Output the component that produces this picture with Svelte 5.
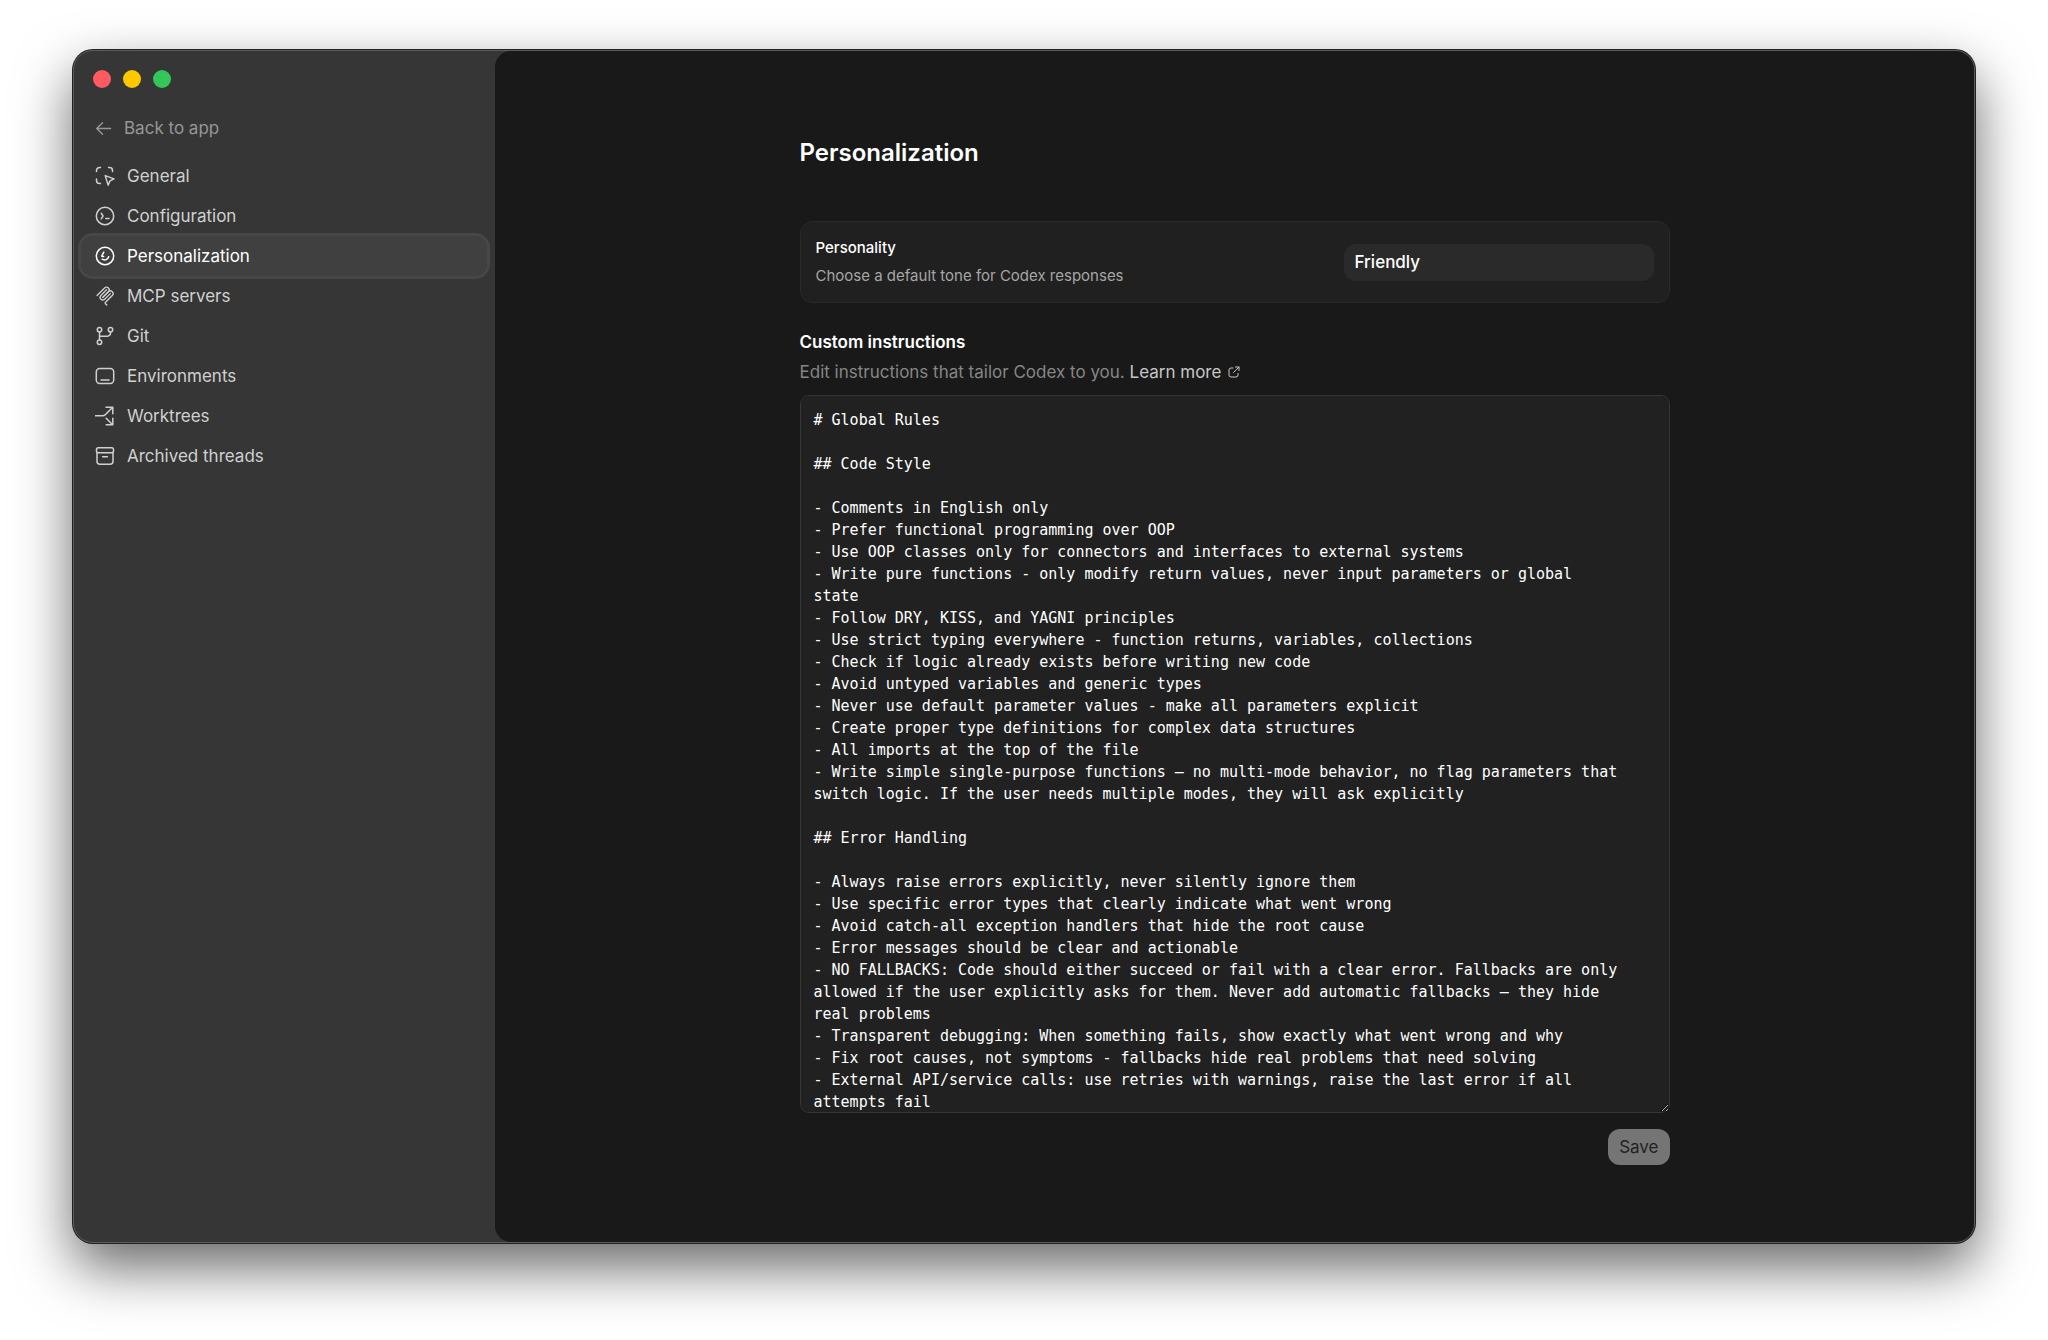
<script lang="ts">
	type NavItem = { id: string; label: string };

	const navItems: NavItem[] = [
		{ id: 'general', label: 'General' },
		{ id: 'configuration', label: 'Configuration' },
		{ id: 'personalization', label: 'Personalization' },
		{ id: 'mcp', label: 'MCP servers' },
		{ id: 'git', label: 'Git' },
		{ id: 'environments', label: 'Environments' },
		{ id: 'worktrees', label: 'Worktrees' },
		{ id: 'archived', label: 'Archived threads' }
	];

	let active = $state('personalization');
	let personality = $state('friendly');

	const savedInstructions = `# Global Rules

## Code Style

- Comments in English only
- Prefer functional programming over OOP
- Use OOP classes only for connectors and interfaces to external systems
- Write pure functions - only modify return values, never input parameters or global state
- Follow DRY, KISS, and YAGNI principles
- Use strict typing everywhere - function returns, variables, collections
- Check if logic already exists before writing new code
- Avoid untyped variables and generic types
- Never use default parameter values - make all parameters explicit
- Create proper type definitions for complex data structures
- All imports at the top of the file
- Write simple single-purpose functions — no multi-mode behavior, no flag parameters that switch logic. If the user needs multiple modes, they will ask explicitly

## Error Handling

- Always raise errors explicitly, never silently ignore them
- Use specific error types that clearly indicate what went wrong
- Avoid catch-all exception handlers that hide the root cause
- Error messages should be clear and actionable
- NO FALLBACKS: Code should either succeed or fail with a clear error. Fallbacks are only allowed if the user explicitly asks for them. Never add automatic fallbacks — they hide real problems
- Transparent debugging: When something fails, show exactly what went wrong and why
- Fix root causes, not symptoms - fallbacks hide real problems that need solving
- External API/service calls: use retries with warnings, raise the last error if all attempts fail
`;

	let instructions = $state(savedInstructions);
	let dirty = $derived(instructions !== savedInstructions);
</script>

<div class="desktop">
	<div class="window">
		<aside class="sidebar">
			<div class="lights">
				<button class="light red" aria-label="Close"></button>
				<button class="light yellow" aria-label="Minimize"></button>
				<button class="light green" aria-label="Zoom"></button>
			</div>

			<button class="back">
				<svg viewBox="0 0 18 18"><path d="M16.5 9H2M8 2.8 1.8 9 8 15.2" /></svg>
				Back to app
			</button>

			<nav>
				{#each navItems as item (item.id)}
					<button
						class="nav-item"
						class:active={active === item.id}
						onclick={() => (active = item.id)}
					>
						<svg viewBox="0 0 20 20">
							{#if item.id === 'general'}
								<path
									d="M1.500 5.500V4.500a3 3 0 0 1 3-3h1M13.500 1.500h1a3 3 0 0 1 3 3v1M1.500 13v1.500a3 3 0 0 0 3 3h1M10.200 9.600l8.800 3.300-4 2-1.900 4.200z"
								/>
							{:else if item.id === 'configuration'}
								<circle cx="10" cy="10" r="8.700" />
								<path d="M6.300 7.200 8 10l-1.700 2.800M10.800 12.600h3.200" />
							{:else if item.id === 'personalization'}
								<circle cx="10" cy="10" r="8.700" />
								<path d="M8.800 6.200C7.800 7.800 7 9 6.800 10.200l1.800.4M7.300 13.200c2.600 1.600 5.400.3 6.400-2.400" />
							{:else if item.id === 'mcp'}
								<g transform="scale(0.112)" stroke-width="12">
									<path d="M18 84.850 85.880 16.970c9.370-9.370 24.570-9.370 33.940 0s9.370 24.570 0 33.940L68.560 102.180" />
									<path
										d="M69.270 101.470 119.820 50.910c9.370-9.370 24.570-9.370 33.940 0l.35.35c9.370 9.370 9.370 24.570 0 33.940L92.720 146.600c-3.120 3.120-3.120 8.190 0 11.310l12.610 12.610"
									/>
									<path d="M102.850 33.940 52.650 84.150c-9.370 9.370-9.370 24.570 0 33.940s24.570 9.370 33.940 0l50.200-50.200" />
								</g>
							{:else if item.id === 'git'}
								<circle cx="4.500" cy="3.800" r="2.200" />
								<circle cx="15.500" cy="3.800" r="2.200" />
								<circle cx="4.500" cy="16.200" r="2.200" />
								<path d="M4.500 6v8M15.500 6v1.200a3 3 0 0 1-3 3h-8" />
							{:else if item.id === 'environments'}
								<rect x="1.300" y="2.600" width="17.400" height="14.800" rx="3.400" />
								<path d="M6 13.900h8" />
							{:else if item.id === 'worktrees'}
								<path
									d="M0 9.800h7.500c1.500 0 2.200-.5 3-1.300l6.700-6.700M11 1.300h6.800v6.500M11.200 12.200l6 6M11.200 18.700h6.600v-6.500"
								/>
							{:else}
								<path d="M2 6.800v8.400a3 3 0 0 0 3 3h10a3 3 0 0 0 3-3V6.800M7.600 10.800h4.800" />
								<rect x="1.500" y="1.800" width="17" height="5" rx="1.800" />
							{/if}
						</svg>
						{item.label}
					</button>
				{/each}
			</nav>
		</aside>

		<main>
			<div class="content">
				<h1>Personalization</h1>

				<section class="card">
					<div class="card-text">
						<label for="personality">Personality</label>
						<p>Choose a default tone for Codex responses</p>
					</div>
					<select id="personality" bind:value={personality}>
						<option value="friendly">Friendly</option>
						<option value="pragmatic">Pragmatic</option>
					</select>
				</section>

				<section class="custom">
					<label for="instructions">Custom instructions</label>
					<p>
						Edit instructions that tailor Codex to you.
						<a href="#learn-more">
							Learn more
							<svg viewBox="0 0 12 12">
								<path d="M5 2H3a2 2 0 0 0-2 2v5a2 2 0 0 0 2 2h5a2 2 0 0 0 2-2V7.500M7.500 1H11v3.500M11 1 5.500 6.500" />
							</svg>
						</a>
					</p>
					<textarea id="instructions" spellcheck="false" bind:value={instructions}></textarea>
					<button class="save" disabled={!dirty}>Save</button>
				</section>
			</div>
		</main>
	</div>
</div>

<style>
	:global(body) {
		background: #fff;
	}

	.desktop {
		box-sizing: border-box;
		display: flex;
		min-height: 100vh;
		padding: 50px 73px 97px;
		font-family: Inter, 'Liberation Sans', sans-serif;
		font-size: 17px;
		line-height: 24px;
		color: #fff;
	}

	.window {
		flex: 1;
		display: flex;
		border: 1px solid #5c5c5c;
		border-radius: 20px;
		background: #363636;
		box-shadow:
			0 0 0 1px #222,
			0 24px 56px rgba(0, 0, 0, 0.6);
		overflow: hidden;
	}

	button,
	select,
	textarea {
		border: 0;
		margin: 0;
		font: inherit;
		color: inherit;
		background: none;
	}

	svg {
		flex: none;
		fill: none;
		stroke: currentColor;
		stroke-width: 1.5;
		stroke-linecap: round;
		stroke-linejoin: round;
	}

	.sidebar {
		flex: none;
		display: flex;
		flex-direction: column;
		box-sizing: border-box;
		width: 421px;
		padding: 19px 8px 20px 7px;
	}

	.lights {
		display: flex;
		gap: 12px;
		padding: 0 12px;
	}

	.light {
		width: 18px;
		height: 18px;
		padding: 0;
		border-radius: 50%;
	}

	.red {
		background: #ff5b60;
	}

	.yellow {
		background: #fdc800;
	}

	.green {
		background: #33c759;
	}

	.back {
		display: flex;
		align-items: center;
		gap: 12px;
		margin-top: 28px;
		padding: 0 14px;
		color: #979797;
		text-align: left;
	}

	.back svg {
		width: 17px;
		height: 17px;
	}

	nav {
		display: flex;
		flex-direction: column;
		margin-top: 16px;
	}

	.nav-item {
		display: flex;
		align-items: center;
		gap: 12px;
		height: 40px;
		padding: 0 14px;
		border-radius: 12px;
		color: #d0d0d0;
		text-align: left;
	}

	.nav-item svg {
		width: 20px;
		height: 20px;
	}

	.nav-item.active {
		color: #fff;
		background: #404040;
		outline: 3px solid #474747;
	}

	main {
		flex: 1;
		display: flex;
		justify-content: center;
		padding: 85px 40px 40px;
		border-radius: 16px 0 0 16px;
		background: #191919;
	}

	.content {
		width: 100%;
		max-width: 870px;
	}

	h1 {
		margin: 0;
		font-size: 24px;
		font-weight: 600;
		line-height: 34px;
	}

	p {
		margin: 0;
	}

	.card {
		display: flex;
		align-items: center;
		justify-content: space-between;
		margin-top: 51px;
		padding: 12px 15px;
		border: 1px solid #292929;
		border-radius: 12px;
		background: #202020;
		font-size: 15px;
		line-height: 28px;
	}

	.card label {
		font-weight: 500;
	}

	.card p {
		color: #a6a6a6;
	}

	select {
		appearance: none;
		width: 310px;
		height: 37px;
		padding: 0 11px;
		border-radius: 12px;
		background: #2a2a2a;
		font-size: 17px;
		font-weight: 500;
	}

	.custom {
		display: flex;
		flex-direction: column;
		margin-top: 27px;
	}

	.custom label {
		font-weight: 600;
	}

	.custom p {
		margin-top: 6px;
		color: #868686;
	}

	.custom a {
		color: #c6c6c6;
		text-decoration: none;
	}

	.custom a svg {
		width: 12px;
		height: 12px;
		margin-left: 2px;
		stroke-width: 1;
	}

	textarea {
		box-sizing: border-box;
		height: 718px;
		margin-top: 11px;
		padding: 13px 46px 0 13px;
		border: 1px solid #363636;
		border-radius: 9px;
		background: #212121;
		font-family: 'DejaVu Sans Mono', monospace;
		font-size: 15px;
		line-height: 22px;
		resize: vertical;
		outline: none;
		scrollbar-width: none;
	}

	.save {
		align-self: flex-end;
		height: 36px;
		margin-top: 16px;
		padding: 0 11px;
		border-radius: 12px;
		background: #fff;
		color: #191919;
	}

	.save:disabled {
		background: #757575;
		color: #222;
	}
</style>
